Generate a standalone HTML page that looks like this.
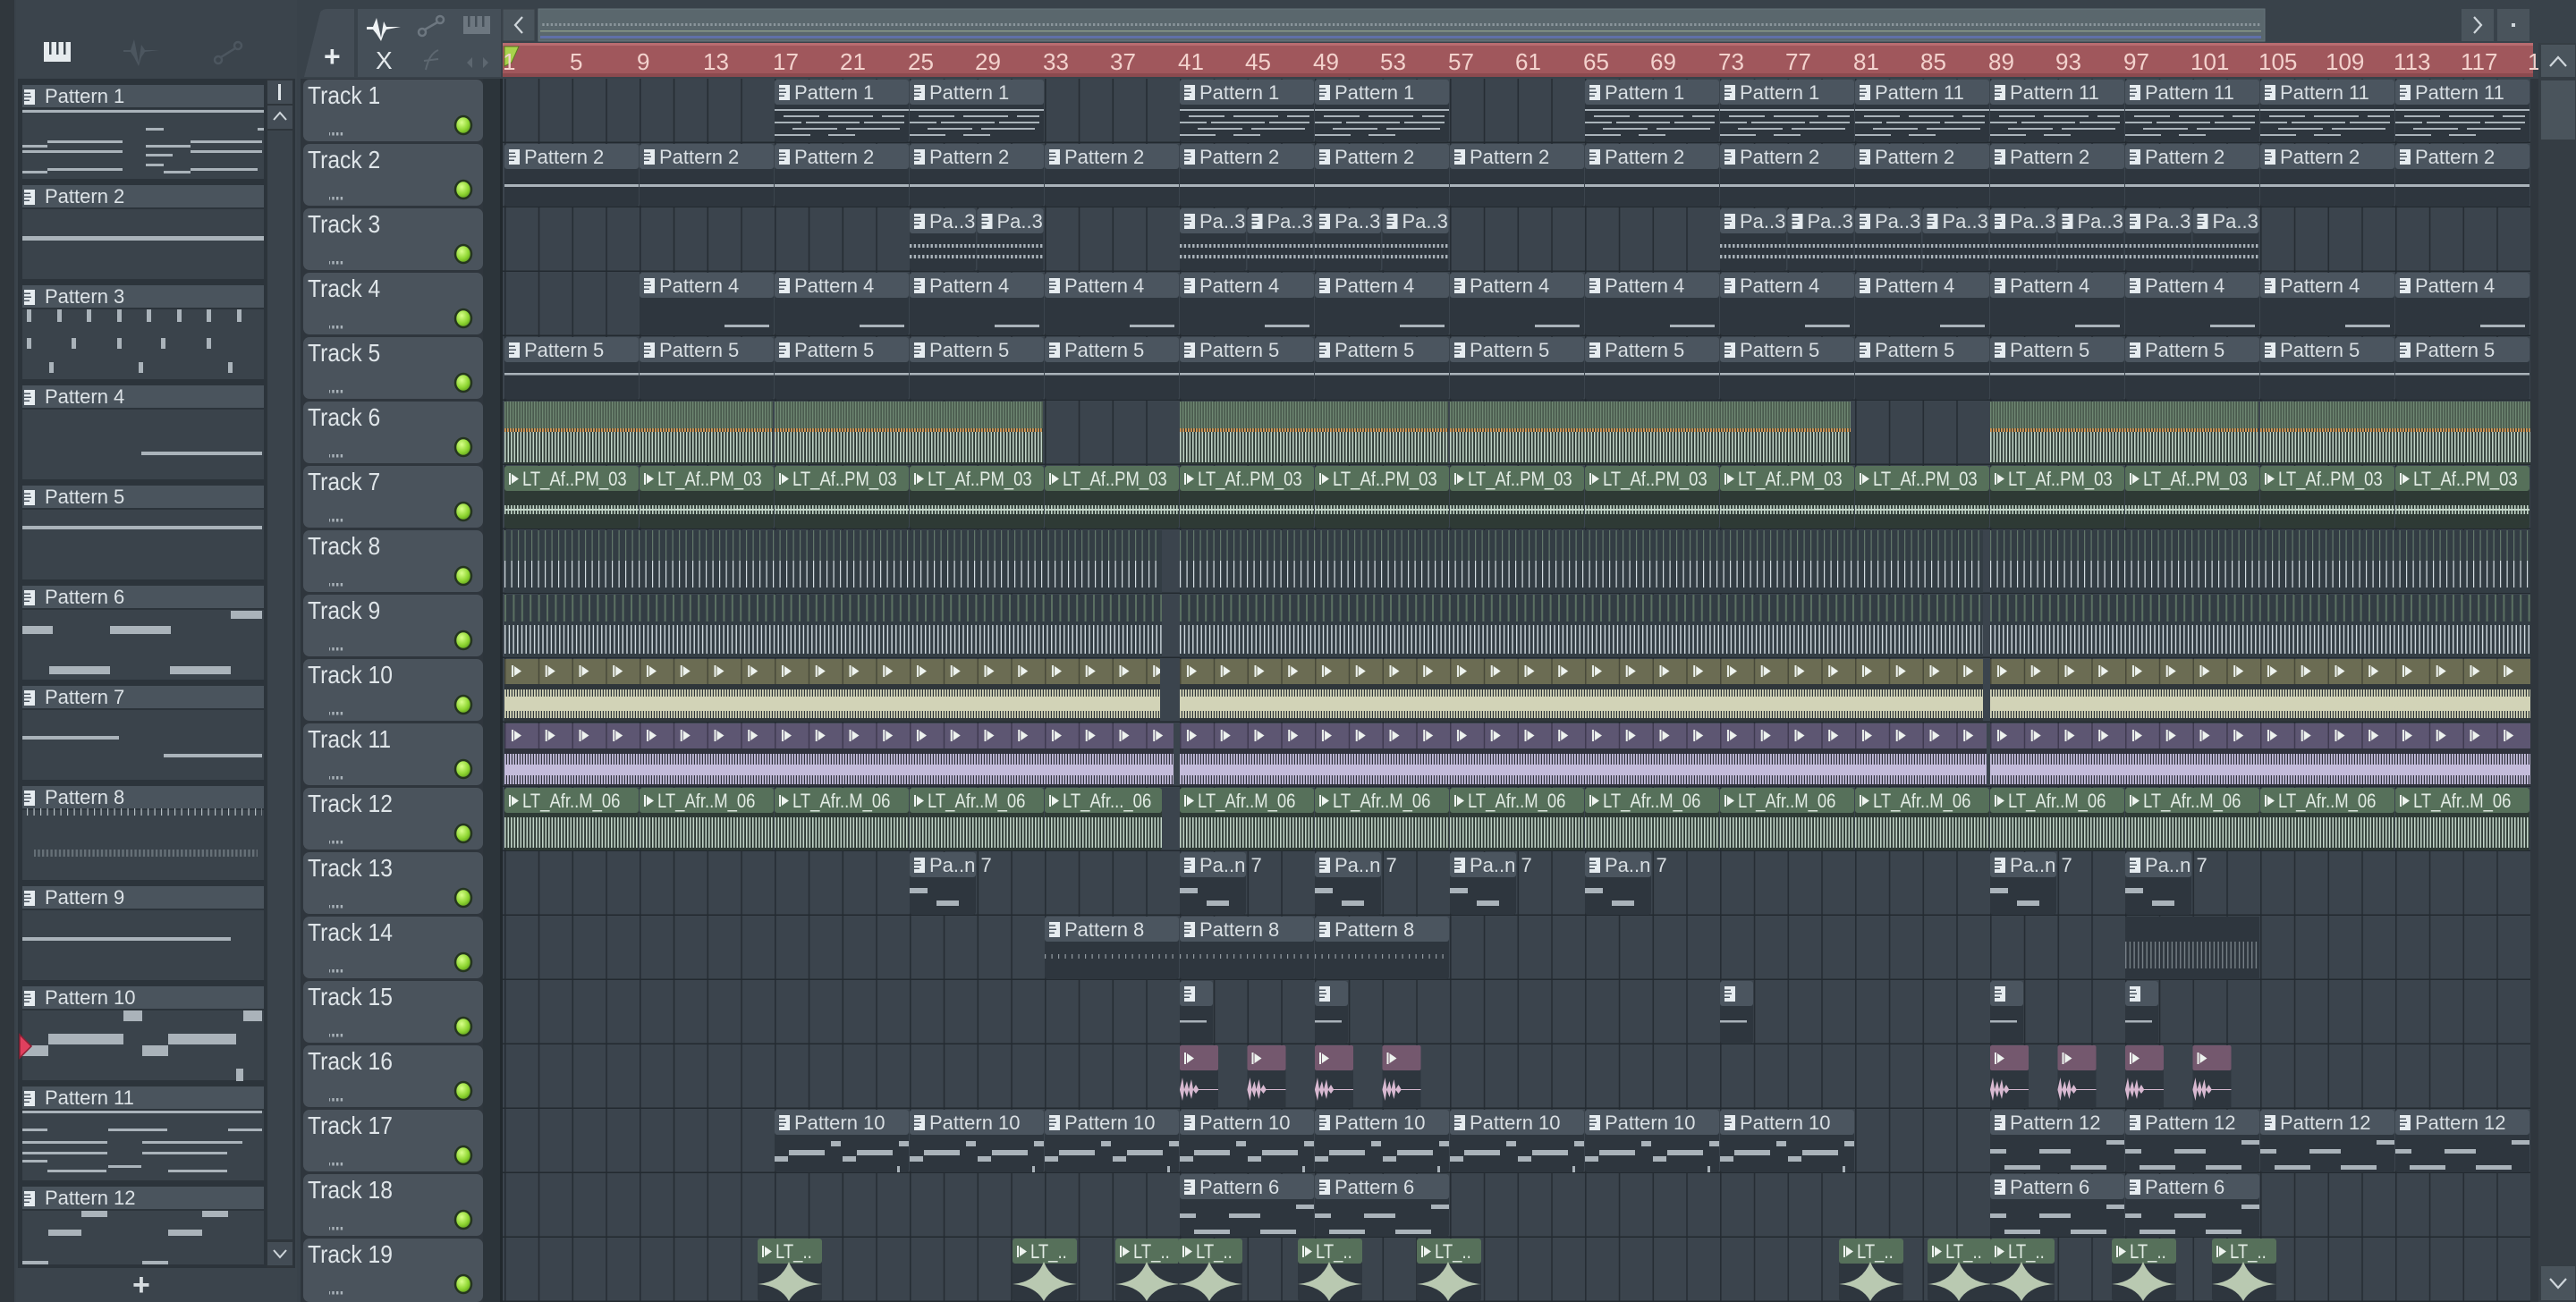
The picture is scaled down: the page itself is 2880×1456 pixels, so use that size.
<!DOCTYPE html>
<html><head><meta charset="utf-8"><style>
html,body{margin:0;padding:0;background:#39424a;width:2880px;height:1456px;overflow:hidden}
svg{display:block}
text{font-family:"Liberation Sans Narrow","Liberation Sans",sans-serif}
.t{font-size:22px;fill:#d9dfe3}
.tr{font-size:28px;fill:#dfe5e9}
.tr text{transform:scaleX(.88);transform-box:fill-box;transform-origin:0 0}
.rl{font-size:26px;fill:#f3d2cd}
.pl{font-size:22px;fill:#dde3e7}
.au{font-size:22px;fill:#e2ebe4}
.au text{transform:scaleX(.84);transform-box:fill-box;transform-origin:0 0}
</style></head><body>
<svg width="2880" height="1456" viewBox="0 0 2880 1456" xmlns="http://www.w3.org/2000/svg">
<defs>
<g id="pi"><rect x="5" y="6" width="12" height="17" fill="#e6ecf0"/><rect x="5" y="9.5" width="7" height="1.5" fill="#4b555f"/><rect x="5" y="13.5" width="8" height="1.5" fill="#4b555f"/><rect x="5" y="17.5" width="6" height="1.5" fill="#4b555f"/></g>
<g id="P8"><rect width="150" height="70" rx="3" fill="#2e363e"/><rect width="150" height="28" rx="3" fill="#4b555f"/><use href="#pi"/></g>
<g id="P4"><rect width="74" height="70" rx="3" fill="#2e363e"/><rect width="74" height="28" rx="3" fill="#4b555f"/><use href="#pi"/></g>
<g id="P2"><rect width="37" height="70" rx="3" fill="#2e363e"/><rect width="37" height="28" rx="3" fill="#4b555f"/><use href="#pi"/></g>
<path id="ai" d="M1 1v13h2V1z M4 2 L12 7.5 L4 13z" fill="#eef3ef"/>
<pattern id="gl" patternUnits="userSpaceOnUse" x="564" width="37.75" height="10"><rect width="1.6" height="10" fill="#262d34"/></pattern>
<pattern id="hl" patternUnits="userSpaceOnUse" y="88" width="10" height="72"><rect y="70.5" width="10" height="1.5" fill="#232a30"/></pattern>
<pattern id="wv" patternUnits="userSpaceOnUse" width="3.5" height="100"><rect width="1.6" height="100" fill="#c1d4c7"/></pattern>
<pattern id="wvC" patternUnits="userSpaceOnUse" width="3" height="100"><rect width="1.8" height="100" fill="#d2d3b7"/></pattern>
<pattern id="wvP" patternUnits="userSpaceOnUse" width="3" height="100"><rect width="1.8" height="100" fill="#c4bcdb"/></pattern>
<pattern id="stG" patternUnits="userSpaceOnUse" width="3" height="100"><rect width="3" height="100" fill="#4a5b4e"/><rect width="1.3" height="100" fill="#6f8873"/></pattern>
<pattern id="or" patternUnits="userSpaceOnUse" width="3" height="10"><rect width="1.8" height="10" fill="#d99a55"/></pattern>
<pattern id="tk" patternUnits="userSpaceOnUse" width="7.5" height="100"><rect width="1.2" height="100" fill="#d4dde2"/></pattern>
<pattern id="tkg" patternUnits="userSpaceOnUse" width="7.5" height="100"><rect width="1.2" height="100" fill="#62776a"/></pattern>
<pattern id="tkg9" patternUnits="userSpaceOnUse" width="9.4" height="100"><rect width="2" height="100" fill="#5b7062"/></pattern>
<pattern id="tk9" patternUnits="userSpaceOnUse" width="4.7" height="100"><rect width="1.4" height="100" fill="#d0dae0"/></pattern>
<pattern id="dash" patternUnits="userSpaceOnUse" width="4.7" height="10"><rect width="2.4" height="10" fill="#aab3ba"/></pattern>
<pattern id="sO" patternUnits="userSpaceOnUse" width="37.75" height="28"><rect width="37.75" height="28" fill="#6b6c53"/><rect width="1.5" height="28" fill="#48493a"/><use href="#ai" x="7" y="6"/></pattern>
<pattern id="sU" patternUnits="userSpaceOnUse" width="37.75" height="28"><rect width="37.75" height="28" fill="#5d5672"/><rect width="1.5" height="28" fill="#3f3a50"/><use href="#ai" x="7" y="6"/></pattern>
<g id="n1" fill="#aab3ba"><rect y="33" width="150" height="2"/><rect x="10" y="40" width="40" height="2"/><rect x="60" y="40" width="50" height="2"/><rect x="120" y="40" width="25" height="2"/><rect y="47" width="30" height="2"/><rect x="35" y="47" width="60" height="2"/><rect x="100" y="47" width="45" height="2"/><rect x="20" y="54" width="50" height="2"/><rect x="80" y="54" width="60" height="2"/><rect y="61" width="40" height="2"/><rect x="60" y="61" width="30" height="2"/></g>
<g id="n2"><rect y="45" width="150" height="3" fill="#aab3ba"/></g>
<g id="n3"><rect y="40" width="74" height="4" fill="url(#dash)"/><rect y="52" width="74" height="4" fill="url(#dash)"/></g>
<g id="n4" fill="#aab3ba"><rect x="95" y="58" width="50" height="3"/></g>
<g id="n5"><rect y="40" width="150" height="2.5" fill="#aab3ba"/></g>
<g id="n6" fill="#aab3ba"><rect x="0" y="44" width="18" height="5"/><rect x="55" y="44" width="35" height="5"/><rect x="130" y="34" width="20" height="5"/><rect x="16" y="62" width="40" height="5"/><rect x="90" y="62" width="40" height="5"/></g>
<g id="n7" fill="#aab3ba"><rect x="0" y="40" width="20" height="6"/><rect x="30" y="54" width="25" height="6"/></g>
<g id="n8"><rect y="42" width="150" height="5" fill="url(#tk)" opacity=".6"/></g>
<g id="n10" fill="#aab3ba"><rect x="0" y="52" width="15" height="6"/><rect x="16" y="45" width="40" height="6"/><rect x="63" y="35" width="11" height="6"/><rect x="76" y="52" width="15" height="6"/><rect x="92" y="45" width="40" height="6"/><rect x="139" y="35" width="11" height="6"/><rect x="137" y="63" width="3" height="7"/></g>
<g id="n15"><rect y="44" width="30" height="2.5" fill="#aab3ba"/></g>
<g id="A7"><rect width="150" height="70" rx="3" fill="#2e3a35"/><rect width="150" height="28" rx="3" fill="#56705a"/><use href="#ai" x="4" y="7"/><rect y="44" width="150" height="10" fill="url(#wv)"/><rect y="48" width="150" height="2" fill="#c1d4c7"/></g>
<g id="A12"><rect width="150" height="70" rx="3" fill="#2e3a35"/><rect width="150" height="28" rx="3" fill="#56705a"/><use href="#ai" x="4" y="7"/><rect y="33" width="150" height="34" fill="url(#wv)"/></g>
<g id="A19"><rect width="72" height="70" rx="3" fill="#2e363e"/><rect width="72" height="28" rx="3" fill="#56705a"/><use href="#ai" x="4" y="7"/><path d="M0 51 Q26 49 35 26 Q44 49 72 51 Q44 53 35 70 Q26 53 0 51Z" fill="#b9c9b1"/></g>
<g id="A16"><rect width="43" height="70" rx="2" fill="#2e363e"/><rect width="43" height="28" rx="2" fill="#74586e"/><use href="#ai" x="4" y="7"/><path d="M0 49 L3 36 L5 49 L8 40 L10 49 L13 38 L15 49 L18 44 L21 49 L43 49 L43 50 L21 50 L18 54 L15 50 L13 60 L10 50 L8 58 L5 50 L3 62 L0 50Z" fill="#d8b9d1"/></g>
</defs>

<rect width="2880" height="1456" fill="#39424a"/>
<rect x="0" y="0" width="16" height="1456" fill="#30373d"/>
<rect x="18" y="0" width="314" height="1456" fill="#3b444c"/>
<g fill="#e6ebee"><rect x="49" y="47" width="30" height="22"/></g>
<g fill="#3b444c"><rect x="55" y="47" width="2.5" height="14"/><rect x="63" y="47" width="2.5" height="14"/><rect x="71" y="47" width="2.5" height="14"/></g>
<path d="M138 56 L146 56 L150 44 L155 70 L158 50 L162 56 L178 56 L162 58 L158 64 L155 74 L150 64 L146 58 L138 58Z" fill="#4c565f"/>
<g stroke="#4c565f" stroke-width="2.5" fill="none"><circle cx="244" cy="67" r="4"/><circle cx="266" cy="51" r="4"/><line x1="247" y1="64" x2="263" y2="54"/></g>
<rect x="20" y="88" width="310" height="1330" fill="#2c343b"/>
<g>
<rect x="25" y="95" width="270" height="25" fill="#4a545d"/><rect x="25" y="122" width="270" height="78" fill="#3a434b"/>
<rect x="25" y="207" width="270" height="25" fill="#4a545d"/><rect x="25" y="234" width="270" height="78" fill="#3a434b"/>
<rect x="25" y="319" width="270" height="25" fill="#4a545d"/><rect x="25" y="346" width="270" height="78" fill="#3a434b"/>
<rect x="25" y="431" width="270" height="25" fill="#4a545d"/><rect x="25" y="458" width="270" height="78" fill="#3a434b"/>
<rect x="25" y="543" width="270" height="25" fill="#4a545d"/><rect x="25" y="570" width="270" height="78" fill="#3a434b"/>
<rect x="25" y="655" width="270" height="25" fill="#4a545d"/><rect x="25" y="682" width="270" height="78" fill="#3a434b"/>
<rect x="25" y="767" width="270" height="25" fill="#4a545d"/><rect x="25" y="794" width="270" height="78" fill="#3a434b"/>
<rect x="25" y="879" width="270" height="25" fill="#4a545d"/><rect x="25" y="906" width="270" height="78" fill="#3a434b"/>
<rect x="25" y="991" width="270" height="25" fill="#4a545d"/><rect x="25" y="1018" width="270" height="78" fill="#3a434b"/>
<rect x="25" y="1103" width="270" height="25" fill="#4a545d"/><rect x="25" y="1130" width="270" height="78" fill="#3a434b"/>
<rect x="25" y="1215" width="270" height="25" fill="#4a545d"/><rect x="25" y="1242" width="270" height="78" fill="#3a434b"/>
<rect x="25" y="1327" width="270" height="25" fill="#4a545d"/><rect x="25" y="1354" width="270" height="60" fill="#3a434b"/>
</g>
<g><use href="#pi" x="22" y="94"/><use href="#pi" x="22" y="206"/><use href="#pi" x="22" y="318"/><use href="#pi" x="22" y="430"/><use href="#pi" x="22" y="542"/><use href="#pi" x="22" y="654"/><use href="#pi" x="22" y="766"/><use href="#pi" x="22" y="878"/><use href="#pi" x="22" y="990"/><use href="#pi" x="22" y="1102"/><use href="#pi" x="22" y="1214"/><use href="#pi" x="22" y="1326"/></g>
<g class="pl">
<text x="50" y="115" class="pl">Pattern 1</text><text x="50" y="227" class="pl">Pattern 2</text><text x="50" y="339" class="pl">Pattern 3</text><text x="50" y="451" class="pl">Pattern 4</text><text x="50" y="563" class="pl">Pattern 5</text><text x="50" y="675" class="pl">Pattern 6</text><text x="50" y="787" class="pl">Pattern 7</text><text x="50" y="899" class="pl">Pattern 8</text><text x="50" y="1011" class="pl">Pattern 9</text><text x="50" y="1123" class="pl">Pattern 10</text><text x="50" y="1235" class="pl">Pattern 11</text><text x="50" y="1347" class="pl">Pattern 12</text>
</g>
<g fill="#aab3ba">
<rect x="25" y="123" width="270" height="3"/><rect x="163" y="143" width="20" height="3"/><rect x="288" y="143" width="7" height="3"/><rect x="25" y="162" width="28" height="3"/><rect x="53" y="157" width="84" height="3"/><rect x="163" y="162" width="50" height="3"/><rect x="213" y="157" width="80" height="3"/><rect x="25" y="168" width="28" height="3"/><rect x="53" y="168" width="84" height="3"/><rect x="163" y="172" width="30" height="3"/><rect x="213" y="168" width="80" height="3"/><rect x="163" y="183" width="20" height="3"/><rect x="25" y="191" width="28" height="3"/><rect x="53" y="188" width="84" height="3"/><rect x="183" y="191" width="30" height="3"/><rect x="213" y="188" width="75" height="3"/>
<rect x="25" y="264" width="270" height="5"/>
<rect x="30" y="346" width="5" height="14"/><rect x="64" y="346" width="5" height="14"/><rect x="97" y="346" width="5" height="14"/><rect x="131" y="346" width="5" height="14"/><rect x="164" y="346" width="5" height="14"/><rect x="198" y="346" width="5" height="14"/><rect x="231" y="346" width="5" height="14"/><rect x="265" y="346" width="5" height="14"/>
<rect x="30" y="378" width="5" height="12"/><rect x="80" y="378" width="5" height="12"/><rect x="131" y="378" width="5" height="12"/><rect x="180" y="378" width="5" height="12"/><rect x="231" y="378" width="5" height="12"/><rect x="55" y="405" width="5" height="12"/><rect x="155" y="405" width="5" height="12"/><rect x="255" y="405" width="5" height="12"/>
<rect x="158" y="505" width="135" height="4"/>
<rect x="25" y="588" width="268" height="4"/>
<rect x="258" y="683" width="35" height="9"/><rect x="25" y="700" width="34" height="9"/><rect x="123" y="700" width="68" height="9"/><rect x="55" y="745" width="68" height="9"/><rect x="190" y="745" width="68" height="9"/>
<rect x="25" y="823" width="108" height="4"/><rect x="183" y="843" width="110" height="4"/>
<g opacity=".8"><rect x="25" y="904" width="268" height="8" fill="url(#tk)"/><rect x="38" y="950" width="250" height="8" fill="url(#dash)" opacity=".5"/></g>
<rect x="25" y="1048" width="233" height="4"/>
<rect x="138" y="1130" width="21" height="12"/><rect x="272" y="1130" width="21" height="12"/><rect x="54" y="1156" width="84" height="12"/><rect x="188" y="1156" width="76" height="12"/><rect x="25" y="1169" width="29" height="12"/><rect x="159" y="1169" width="29" height="12"/><rect x="264" y="1195" width="8" height="14"/>
<rect x="25" y="1242" width="268" height="3"/><rect x="25" y="1262" width="28" height="3"/><rect x="121" y="1262" width="66" height="3"/><rect x="255" y="1262" width="38" height="3"/><rect x="25" y="1276" width="95" height="3"/><rect x="159" y="1276" width="112" height="3"/><rect x="25" y="1288" width="95" height="3"/><rect x="159" y="1288" width="95" height="3"/><rect x="25" y="1297" width="28" height="3"/><rect x="121" y="1303" width="37" height="3"/><rect x="53" y="1308" width="66" height="3"/><rect x="188" y="1308" width="66" height="3"/>
<rect x="91" y="1354" width="29" height="7"/><rect x="226" y="1354" width="29" height="7"/><rect x="54" y="1375" width="37" height="7"/><rect x="188" y="1375" width="38" height="7"/><rect x="25" y="1410" width="29" height="4"/><rect x="159" y="1410" width="29" height="4"/>
</g>
<path d="M22 1157 L35 1170 L22 1183Z" fill="#e0405e" stroke="#8a1f33" stroke-width="1.5"/>
<rect x="298" y="88" width="30" height="1330" fill="#2e353b"/>
<rect x="299" y="90" width="28" height="26" fill="#434c55"/><rect x="311" y="94" width="3" height="18" fill="#dfe5e9"/>
<rect x="299" y="118" width="28" height="26" fill="#434c55"/><path d="M306 134 L313 126 L320 134" stroke="#cfd6db" stroke-width="2" fill="none"/>
<rect x="299" y="146" width="28" height="1240" fill="#3a434b"/>
<rect x="299" y="1389" width="28" height="26" fill="#434c55"/><path d="M306 1398 L313 1406 L320 1398" stroke="#cfd6db" stroke-width="2" fill="none"/>
<text x="148" y="1448" style="font-size:34px;fill:#d7dde1;font-family:'Liberation Sans',sans-serif;font-weight:bold">+</text>

<path d="M340 86 L358 14 Q360 10 366 10 L396 10 L396 86Z" fill="#444d56"/>
<text x="362" y="74" style="font-size:32px;fill:#e8edf0;font-family:'Liberation Sans',sans-serif;font-weight:bold">+</text>
<rect x="400" y="10" width="160" height="76" fill="#454f58"/>
<path d="M410 30 L417 30 L421 20 L426 42 L429 24 L432 30 L448 30 L432 33 L429 38 L426 46 L421 38 L417 33 L410 33Z" fill="#eef2f4"/>
<text x="420" y="77" style="font-size:28px;fill:#e4e9ec;font-family:'Liberation Sans',sans-serif">X</text>
<g stroke="#6d7780" stroke-width="2.5" fill="none"><circle cx="472" cy="36" r="4"/><circle cx="492" cy="22" r="4"/><line x1="475" y1="33" x2="489" y2="25"/></g>
<rect x="518" y="18" width="30" height="20" fill="#6d7780"/>
<g fill="#454f58"><rect x="523" y="18" width="2.5" height="12"/><rect x="531" y="18" width="2.5" height="12"/><rect x="539" y="18" width="2.5" height="12"/></g>
<path d="M476 78 Q480 60 490 56 M474 68 L490 66" stroke="#5d6770" stroke-width="2" fill="none"/>
<path d="M522 70 L528 64 L528 76Z M546 70 L540 64 L540 76Z" fill="#5d6770"/>
<rect x="562" y="10" width="36" height="36" fill="#4a545c" stroke="#3a4249"/>
<path d="M584 19 L576 28 L584 37" stroke="#d0d7dc" stroke-width="2.2" fill="none"/>
<rect x="602" y="10" width="1930" height="36" fill="#5a676d" stroke="#66747b"/>
<rect x="604" y="26" width="1924" height="3" fill="url(#dash)" opacity=".6"/>
<rect x="604" y="34" width="1924" height="1.5" fill="#8a9a8a"/>
<rect x="604" y="40" width="1924" height="3" fill="#6070a8"/>
<rect x="2752" y="10" width="36" height="36" fill="#4a545c"/>
<path d="M2766 19 L2774 28 L2766 37" stroke="#d0d7dc" stroke-width="2.2" fill="none"/>
<rect x="2792" y="10" width="36" height="36" fill="#4a545c"/><rect x="2808" y="26" width="4" height="4" fill="#d0d7dc"/>
<rect x="562" y="48" width="2270" height="38" fill="#a0575c"/>
<rect x="562" y="48" width="2270" height="3" fill="#b86c70"/>
<rect x="562" y="82" width="2270" height="4" fill="#8c4a4f"/>
<path d="M564 52 L580 52 L572 70 L564 74Z" fill="#a8d24c" stroke="#5c7a22" stroke-width="1"/>
<g class="rl">
<text x="562" y="78">1</text><text x="637" y="78">5</text><text x="712" y="78">9</text><text x="786" y="78">13</text><text x="864" y="78">17</text><text x="939" y="78">21</text><text x="1015" y="78">25</text><text x="1090" y="78">29</text><text x="1166" y="78">33</text><text x="1241" y="78">37</text><text x="1317" y="78">41</text><text x="1392" y="78">45</text><text x="1468" y="78">49</text><text x="1543" y="78">53</text><text x="1619" y="78">57</text><text x="1694" y="78">61</text><text x="1770" y="78">65</text><text x="1845" y="78">69</text><text x="1921" y="78">73</text><text x="1996" y="78">77</text><text x="2072" y="78">81</text><text x="2147" y="78">85</text><text x="2223" y="78">89</text><text x="2298" y="78">93</text><text x="2374" y="78">97</text><text x="2449" y="78">101</text><text x="2525" y="78">105</text><text x="2600" y="78">109</text><text x="2676" y="78">113</text><text x="2751" y="78">117</text><text x="2826" y="78">1</text>
</g>
<rect x="2838" y="48" width="42" height="1408" fill="#353d44"/>
<rect x="2841" y="50" width="38" height="36" fill="#4a545c"/><path d="M2851 74 L2860 64 L2869 74" stroke="#d0d7dc" stroke-width="2.2" fill="none"/>
<rect x="2841" y="90" width="38" height="66" fill="#4a545c"/>
<rect x="2841" y="1416" width="38" height="38" fill="#4a545c"/><path d="M2851 1430 L2860 1440 L2869 1430" stroke="#d0d7dc" stroke-width="2.2" fill="none"/>

<rect x="336" y="88" width="226" height="1368" fill="#2f363d"/>
<rect x="540" y="88" width="22" height="1368" fill="#2c343a"/>
<rect x="559" y="88" width="3" height="1368" fill="#21282d"/>
<g fill="#4a535c">
<rect x="339" y="89" width="201" height="69" rx="7"/><rect x="339" y="161" width="201" height="69" rx="7"/><rect x="339" y="233" width="201" height="69" rx="7"/><rect x="339" y="305" width="201" height="69" rx="7"/><rect x="339" y="377" width="201" height="69" rx="7"/><rect x="339" y="449" width="201" height="69" rx="7"/><rect x="339" y="521" width="201" height="69" rx="7"/><rect x="339" y="593" width="201" height="69" rx="7"/><rect x="339" y="665" width="201" height="69" rx="7"/><rect x="339" y="737" width="201" height="69" rx="7"/><rect x="339" y="809" width="201" height="69" rx="7"/><rect x="339" y="881" width="201" height="69" rx="7"/><rect x="339" y="953" width="201" height="69" rx="7"/><rect x="339" y="1025" width="201" height="69" rx="7"/><rect x="339" y="1097" width="201" height="69" rx="7"/><rect x="339" y="1169" width="201" height="69" rx="7"/><rect x="339" y="1241" width="201" height="69" rx="7"/><rect x="339" y="1313" width="201" height="69" rx="7"/><rect x="339" y="1385" width="201" height="71" rx="7"/>
</g>
<g class="tr">
<text x="344" y="116">Track 1</text><text x="344" y="188">Track 2</text><text x="344" y="260">Track 3</text><text x="344" y="332">Track 4</text><text x="344" y="404">Track 5</text><text x="344" y="476">Track 6</text><text x="344" y="548">Track 7</text><text x="344" y="620">Track 8</text><text x="344" y="692">Track 9</text><text x="344" y="764">Track 10</text><text x="344" y="836">Track 11</text><text x="344" y="908">Track 12</text><text x="344" y="980">Track 13</text><text x="344" y="1052">Track 14</text><text x="344" y="1124">Track 15</text><text x="344" y="1196">Track 16</text><text x="344" y="1268">Track 17</text><text x="344" y="1340">Track 18</text><text x="344" y="1412">Track 19</text>
</g>
<g>
<rect x="368" y="148" width="16" height="3.5" fill="url(#dash)"/><rect x="368" y="220" width="16" height="3.5" fill="url(#dash)"/><rect x="368" y="292" width="16" height="3.5" fill="url(#dash)"/><rect x="368" y="364" width="16" height="3.5" fill="url(#dash)"/><rect x="368" y="436" width="16" height="3.5" fill="url(#dash)"/><rect x="368" y="508" width="16" height="3.5" fill="url(#dash)"/><rect x="368" y="580" width="16" height="3.5" fill="url(#dash)"/><rect x="368" y="652" width="16" height="3.5" fill="url(#dash)"/><rect x="368" y="724" width="16" height="3.5" fill="url(#dash)"/><rect x="368" y="796" width="16" height="3.5" fill="url(#dash)"/><rect x="368" y="868" width="16" height="3.5" fill="url(#dash)"/><rect x="368" y="940" width="16" height="3.5" fill="url(#dash)"/><rect x="368" y="1012" width="16" height="3.5" fill="url(#dash)"/><rect x="368" y="1084" width="16" height="3.5" fill="url(#dash)"/><rect x="368" y="1156" width="16" height="3.5" fill="url(#dash)"/><rect x="368" y="1228" width="16" height="3.5" fill="url(#dash)"/><rect x="368" y="1300" width="16" height="3.5" fill="url(#dash)"/><rect x="368" y="1372" width="16" height="3.5" fill="url(#dash)"/><rect x="368" y="1444" width="16" height="3.5" fill="url(#dash)"/>
</g>
<radialGradient id="led" cx="0.4" cy="0.35" r="0.7"><stop offset="0" stop-color="#d8ff8a"/><stop offset="0.6" stop-color="#8fd632"/><stop offset="1" stop-color="#5a9a18"/></radialGradient>
<g fill="url(#led)" stroke="#253520" stroke-width="2.5">
<ellipse cx="518" cy="140" rx="9" ry="10"/><ellipse cx="518" cy="212" rx="9" ry="10"/><ellipse cx="518" cy="284" rx="9" ry="10"/><ellipse cx="518" cy="356" rx="9" ry="10"/><ellipse cx="518" cy="428" rx="9" ry="10"/><ellipse cx="518" cy="500" rx="9" ry="10"/><ellipse cx="518" cy="572" rx="9" ry="10"/><ellipse cx="518" cy="644" rx="9" ry="10"/><ellipse cx="518" cy="716" rx="9" ry="10"/><ellipse cx="518" cy="788" rx="9" ry="10"/><ellipse cx="518" cy="860" rx="9" ry="10"/><ellipse cx="518" cy="932" rx="9" ry="10"/><ellipse cx="518" cy="1004" rx="9" ry="10"/><ellipse cx="518" cy="1076" rx="9" ry="10"/><ellipse cx="518" cy="1148" rx="9" ry="10"/><ellipse cx="518" cy="1220" rx="9" ry="10"/><ellipse cx="518" cy="1292" rx="9" ry="10"/><ellipse cx="518" cy="1364" rx="9" ry="10"/><ellipse cx="518" cy="1436" rx="9" ry="10"/>
</g>

<rect x="562" y="88" width="2267" height="1368" fill="#3b444d"/>
<rect x="562" y="88" width="2267" height="1368" fill="url(#gl)"/>
<rect x="562" y="88" width="2267" height="1368" fill="url(#hl)"/>
<rect x="2829" y="88" width="9" height="1368" fill="#2f363d"/>

<g class="t">
<g transform="translate(866,89)"><use href="#P8"/><use href="#n1"/><text x="22" y="22">Pattern 1</text></g>
<g transform="translate(1017,89)"><use href="#P8"/><use href="#n1"/><text x="22" y="22">Pattern 1</text></g>
<g transform="translate(1319,89)"><use href="#P8"/><use href="#n1"/><text x="22" y="22">Pattern 1</text></g>
<g transform="translate(1470,89)"><use href="#P8"/><use href="#n1"/><text x="22" y="22">Pattern 1</text></g>
<g transform="translate(1772,89)"><use href="#P8"/><use href="#n1"/><text x="22" y="22">Pattern 1</text></g>
<g transform="translate(1923,89)"><use href="#P8"/><use href="#n1"/><text x="22" y="22">Pattern 1</text></g>
<g transform="translate(2074,89)"><use href="#P8"/><use href="#n1"/><text x="22" y="22">Pattern 11</text></g>
<g transform="translate(2225,89)"><use href="#P8"/><use href="#n1"/><text x="22" y="22">Pattern 11</text></g>
<g transform="translate(2376,89)"><use href="#P8"/><use href="#n1"/><text x="22" y="22">Pattern 11</text></g>
<g transform="translate(2527,89)"><use href="#P8"/><use href="#n1"/><text x="22" y="22">Pattern 11</text></g>
<g transform="translate(2678,89)"><use href="#P8"/><use href="#n1"/><text x="22" y="22">Pattern 11</text></g>
</g>
<g class="t">
<g transform="translate(564,161)"><use href="#P8"/><use href="#n2"/><text x="22" y="22">Pattern 2</text></g>
<g transform="translate(715,161)"><use href="#P8"/><use href="#n2"/><text x="22" y="22">Pattern 2</text></g>
<g transform="translate(866,161)"><use href="#P8"/><use href="#n2"/><text x="22" y="22">Pattern 2</text></g>
<g transform="translate(1017,161)"><use href="#P8"/><use href="#n2"/><text x="22" y="22">Pattern 2</text></g>
<g transform="translate(1168,161)"><use href="#P8"/><use href="#n2"/><text x="22" y="22">Pattern 2</text></g>
<g transform="translate(1319,161)"><use href="#P8"/><use href="#n2"/><text x="22" y="22">Pattern 2</text></g>
<g transform="translate(1470,161)"><use href="#P8"/><use href="#n2"/><text x="22" y="22">Pattern 2</text></g>
<g transform="translate(1621,161)"><use href="#P8"/><use href="#n2"/><text x="22" y="22">Pattern 2</text></g>
<g transform="translate(1772,161)"><use href="#P8"/><use href="#n2"/><text x="22" y="22">Pattern 2</text></g>
<g transform="translate(1923,161)"><use href="#P8"/><use href="#n2"/><text x="22" y="22">Pattern 2</text></g>
<g transform="translate(2074,161)"><use href="#P8"/><use href="#n2"/><text x="22" y="22">Pattern 2</text></g>
<g transform="translate(2225,161)"><use href="#P8"/><use href="#n2"/><text x="22" y="22">Pattern 2</text></g>
<g transform="translate(2376,161)"><use href="#P8"/><use href="#n2"/><text x="22" y="22">Pattern 2</text></g>
<g transform="translate(2527,161)"><use href="#P8"/><use href="#n2"/><text x="22" y="22">Pattern 2</text></g>
<g transform="translate(2678,161)"><use href="#P8"/><use href="#n2"/><text x="22" y="22">Pattern 2</text></g>
</g>
<g class="t">
<g transform="translate(1017,233)"><use href="#P4"/><use href="#n3"/><text x="22" y="22">Pa..3</text></g>
<g transform="translate(1092.5,233)"><use href="#P4"/><use href="#n3"/><text x="22" y="22">Pa..3</text></g>
<g transform="translate(1319,233)"><use href="#P4"/><use href="#n3"/><text x="22" y="22">Pa..3</text></g>
<g transform="translate(1394.5,233)"><use href="#P4"/><use href="#n3"/><text x="22" y="22">Pa..3</text></g>
<g transform="translate(1470,233)"><use href="#P4"/><use href="#n3"/><text x="22" y="22">Pa..3</text></g>
<g transform="translate(1545.5,233)"><use href="#P4"/><use href="#n3"/><text x="22" y="22">Pa..3</text></g>
<g transform="translate(1923,233)"><use href="#P4"/><use href="#n3"/><text x="22" y="22">Pa..3</text></g>
<g transform="translate(1998.5,233)"><use href="#P4"/><use href="#n3"/><text x="22" y="22">Pa..3</text></g>
<g transform="translate(2074,233)"><use href="#P4"/><use href="#n3"/><text x="22" y="22">Pa..3</text></g>
<g transform="translate(2149.5,233)"><use href="#P4"/><use href="#n3"/><text x="22" y="22">Pa..3</text></g>
<g transform="translate(2225,233)"><use href="#P4"/><use href="#n3"/><text x="22" y="22">Pa..3</text></g>
<g transform="translate(2300.5,233)"><use href="#P4"/><use href="#n3"/><text x="22" y="22">Pa..3</text></g>
<g transform="translate(2376,233)"><use href="#P4"/><use href="#n3"/><text x="22" y="22">Pa..3</text></g>
<g transform="translate(2451.5,233)"><use href="#P4"/><use href="#n3"/><text x="22" y="22">Pa..3</text></g>
</g>
<g class="t">
<g transform="translate(715,305)"><use href="#P8"/><use href="#n4"/><text x="22" y="22">Pattern 4</text></g>
<g transform="translate(866,305)"><use href="#P8"/><use href="#n4"/><text x="22" y="22">Pattern 4</text></g>
<g transform="translate(1017,305)"><use href="#P8"/><use href="#n4"/><text x="22" y="22">Pattern 4</text></g>
<g transform="translate(1168,305)"><use href="#P8"/><use href="#n4"/><text x="22" y="22">Pattern 4</text></g>
<g transform="translate(1319,305)"><use href="#P8"/><use href="#n4"/><text x="22" y="22">Pattern 4</text></g>
<g transform="translate(1470,305)"><use href="#P8"/><use href="#n4"/><text x="22" y="22">Pattern 4</text></g>
<g transform="translate(1621,305)"><use href="#P8"/><use href="#n4"/><text x="22" y="22">Pattern 4</text></g>
<g transform="translate(1772,305)"><use href="#P8"/><use href="#n4"/><text x="22" y="22">Pattern 4</text></g>
<g transform="translate(1923,305)"><use href="#P8"/><use href="#n4"/><text x="22" y="22">Pattern 4</text></g>
<g transform="translate(2074,305)"><use href="#P8"/><use href="#n4"/><text x="22" y="22">Pattern 4</text></g>
<g transform="translate(2225,305)"><use href="#P8"/><use href="#n4"/><text x="22" y="22">Pattern 4</text></g>
<g transform="translate(2376,305)"><use href="#P8"/><use href="#n4"/><text x="22" y="22">Pattern 4</text></g>
<g transform="translate(2527,305)"><use href="#P8"/><use href="#n4"/><text x="22" y="22">Pattern 4</text></g>
<g transform="translate(2678,305)"><use href="#P8"/><use href="#n4"/><text x="22" y="22">Pattern 4</text></g>
</g>
<g class="t">
<g transform="translate(564,377)"><use href="#P8"/><use href="#n5"/><text x="22" y="22">Pattern 5</text></g>
<g transform="translate(715,377)"><use href="#P8"/><use href="#n5"/><text x="22" y="22">Pattern 5</text></g>
<g transform="translate(866,377)"><use href="#P8"/><use href="#n5"/><text x="22" y="22">Pattern 5</text></g>
<g transform="translate(1017,377)"><use href="#P8"/><use href="#n5"/><text x="22" y="22">Pattern 5</text></g>
<g transform="translate(1168,377)"><use href="#P8"/><use href="#n5"/><text x="22" y="22">Pattern 5</text></g>
<g transform="translate(1319,377)"><use href="#P8"/><use href="#n5"/><text x="22" y="22">Pattern 5</text></g>
<g transform="translate(1470,377)"><use href="#P8"/><use href="#n5"/><text x="22" y="22">Pattern 5</text></g>
<g transform="translate(1621,377)"><use href="#P8"/><use href="#n5"/><text x="22" y="22">Pattern 5</text></g>
<g transform="translate(1772,377)"><use href="#P8"/><use href="#n5"/><text x="22" y="22">Pattern 5</text></g>
<g transform="translate(1923,377)"><use href="#P8"/><use href="#n5"/><text x="22" y="22">Pattern 5</text></g>
<g transform="translate(2074,377)"><use href="#P8"/><use href="#n5"/><text x="22" y="22">Pattern 5</text></g>
<g transform="translate(2225,377)"><use href="#P8"/><use href="#n5"/><text x="22" y="22">Pattern 5</text></g>
<g transform="translate(2376,377)"><use href="#P8"/><use href="#n5"/><text x="22" y="22">Pattern 5</text></g>
<g transform="translate(2527,377)"><use href="#P8"/><use href="#n5"/><text x="22" y="22">Pattern 5</text></g>
<g transform="translate(2678,377)"><use href="#P8"/><use href="#n5"/><text x="22" y="22">Pattern 5</text></g>
</g>
<g>
<g transform="translate(564,449)"><rect width="300" height="70" fill="#2e3a35"/><rect width="300" height="30" fill="url(#stG)"/><rect y="30" width="300" height="4" fill="url(#or)"/><rect y="34" width="300" height="34" fill="url(#wv)"/></g>
<g transform="translate(866,449)"><rect width="300" height="70" fill="#2e3a35"/><rect width="300" height="30" fill="url(#stG)"/><rect y="30" width="300" height="4" fill="url(#or)"/><rect y="34" width="300" height="34" fill="url(#wv)"/></g>
<g transform="translate(1319,449)"><rect width="300" height="70" fill="#2e3a35"/><rect width="300" height="30" fill="url(#stG)"/><rect y="30" width="300" height="4" fill="url(#or)"/><rect y="34" width="300" height="34" fill="url(#wv)"/></g>
<g transform="translate(1621,449)"><rect width="448" height="70" fill="#2e3a35"/><rect width="448" height="30" fill="url(#stG)"/><rect y="30" width="448" height="4" fill="url(#or)"/><rect y="34" width="448" height="34" fill="url(#wv)"/></g>
<g transform="translate(2225,449)"><rect width="300" height="70" fill="#2e3a35"/><rect width="300" height="30" fill="url(#stG)"/><rect y="30" width="300" height="4" fill="url(#or)"/><rect y="34" width="300" height="34" fill="url(#wv)"/></g>
<g transform="translate(2527,449)"><rect width="302" height="70" fill="#2e3a35"/><rect width="302" height="30" fill="url(#stG)"/><rect y="30" width="302" height="4" fill="url(#or)"/><rect y="34" width="302" height="34" fill="url(#wv)"/></g>
</g>
<g class="au">
<g transform="translate(564,521)"><use href="#A7"/><text x="20" y="22">LT_Af..PM_03</text></g>
<g transform="translate(715,521)"><use href="#A7"/><text x="20" y="22">LT_Af..PM_03</text></g>
<g transform="translate(866,521)"><use href="#A7"/><text x="20" y="22">LT_Af..PM_03</text></g>
<g transform="translate(1017,521)"><use href="#A7"/><text x="20" y="22">LT_Af..PM_03</text></g>
<g transform="translate(1168,521)"><use href="#A7"/><text x="20" y="22">LT_Af..PM_03</text></g>
<g transform="translate(1319,521)"><use href="#A7"/><text x="20" y="22">LT_Af..PM_03</text></g>
<g transform="translate(1470,521)"><use href="#A7"/><text x="20" y="22">LT_Af..PM_03</text></g>
<g transform="translate(1621,521)"><use href="#A7"/><text x="20" y="22">LT_Af..PM_03</text></g>
<g transform="translate(1772,521)"><use href="#A7"/><text x="20" y="22">LT_Af..PM_03</text></g>
<g transform="translate(1923,521)"><use href="#A7"/><text x="20" y="22">LT_Af..PM_03</text></g>
<g transform="translate(2074,521)"><use href="#A7"/><text x="20" y="22">LT_Af..PM_03</text></g>
<g transform="translate(2225,521)"><use href="#A7"/><text x="20" y="22">LT_Af..PM_03</text></g>
<g transform="translate(2376,521)"><use href="#A7"/><text x="20" y="22">LT_Af..PM_03</text></g>
<g transform="translate(2527,521)"><use href="#A7"/><text x="20" y="22">LT_Af..PM_03</text></g>
<g transform="translate(2678,521)"><use href="#A7"/><text x="20" y="22">LT_Af..PM_03</text></g>
</g>
<g>
<g transform="translate(564,593)"><rect width="735" height="70" fill="#333d44"/><rect width="735" height="34" fill="url(#tkg)"/><rect y="34" width="735" height="30" fill="url(#tk)"/></g>
<g transform="translate(1319,593)"><rect width="898" height="70" fill="#333d44"/><rect width="898" height="34" fill="url(#tkg)"/><rect y="34" width="898" height="30" fill="url(#tk)"/></g>
<g transform="translate(2225,593)"><rect width="604" height="70" fill="#333d44"/><rect width="604" height="34" fill="url(#tkg)"/><rect y="34" width="604" height="30" fill="url(#tk)"/></g>
</g>
<g>
<g transform="translate(564,665)"><rect width="735" height="70" fill="#333d44"/><rect width="735" height="30" fill="url(#tkg9)"/><rect y="34" width="735" height="32" fill="url(#tk9)"/></g>
<g transform="translate(1319,665)"><rect width="898" height="70" fill="#333d44"/><rect width="898" height="30" fill="url(#tkg9)"/><rect y="34" width="898" height="32" fill="url(#tk9)"/></g>
<g transform="translate(2225,665)"><rect width="604" height="70" fill="#333d44"/><rect width="604" height="30" fill="url(#tkg9)"/><rect y="34" width="604" height="32" fill="url(#tk9)"/></g>
</g>
<g>
<g transform="translate(564,737)"><rect width="733" height="70" fill="#2f363a"/><rect width="733" height="28" fill="url(#sO)"/><rect y="34" width="733" height="32" fill="url(#wvC)"/><rect y="42" width="733" height="16" fill="#d2d3b7"/></g>
<g transform="translate(1319,737)"><rect width="898" height="70" fill="#2f363a"/><rect width="898" height="28" fill="url(#sO)"/><rect y="34" width="898" height="32" fill="url(#wvC)"/><rect y="42" width="898" height="16" fill="#d2d3b7"/></g>
<g transform="translate(2225,737)"><rect width="604" height="70" fill="#2f363a"/><rect width="604" height="28" fill="url(#sO)"/><rect y="34" width="604" height="32" fill="url(#wvC)"/><rect y="42" width="604" height="16" fill="#d2d3b7"/></g>
</g>
<g>
<g transform="translate(564,809)"><rect width="748" height="70" fill="#30323d"/><rect width="748" height="28" fill="url(#sU)"/><rect y="34" width="748" height="34" fill="url(#wvP)"/><rect y="46" width="748" height="12" fill="#c4bcdb"/></g>
<g transform="translate(1319,809)"><rect width="902" height="70" fill="#30323d"/><rect width="902" height="28" fill="url(#sU)"/><rect y="34" width="902" height="34" fill="url(#wvP)"/><rect y="46" width="902" height="12" fill="#c4bcdb"/></g>
<g transform="translate(2225,809)"><rect width="604" height="70" fill="#30323d"/><rect width="604" height="28" fill="url(#sU)"/><rect y="34" width="604" height="34" fill="url(#wvP)"/><rect y="46" width="604" height="12" fill="#c4bcdb"/></g>
</g>
<g class="au">
<g transform="translate(564,881)"><use href="#A12"/><text x="20" y="22">LT_Afr..M_06</text></g>
<g transform="translate(715,881)"><use href="#A12"/><text x="20" y="22">LT_Afr..M_06</text></g>
<g transform="translate(866,881)"><use href="#A12"/><text x="20" y="22">LT_Afr..M_06</text></g>
<g transform="translate(1017,881)"><use href="#A12"/><text x="20" y="22">LT_Afr..M_06</text></g>
<g transform="translate(1168,881)"><rect width="131" height="70" rx="3" fill="#2e3a35"/><rect width="131" height="28" rx="3" fill="#56705a"/><use href="#ai" x="4" y="7"/><rect y="33" width="131" height="34" fill="url(#wv)"/><text x="20" y="22">LT_Afr..._06</text></g>
<g transform="translate(1319,881)"><use href="#A12"/><text x="20" y="22">LT_Afr..M_06</text></g>
<g transform="translate(1470,881)"><use href="#A12"/><text x="20" y="22">LT_Afr..M_06</text></g>
<g transform="translate(1621,881)"><use href="#A12"/><text x="20" y="22">LT_Afr..M_06</text></g>
<g transform="translate(1772,881)"><use href="#A12"/><text x="20" y="22">LT_Afr..M_06</text></g>
<g transform="translate(1923,881)"><use href="#A12"/><text x="20" y="22">LT_Afr..M_06</text></g>
<g transform="translate(2074,881)"><use href="#A12"/><text x="20" y="22">LT_Afr..M_06</text></g>
<g transform="translate(2225,881)"><use href="#A12"/><text x="20" y="22">LT_Afr..M_06</text></g>
<g transform="translate(2376,881)"><use href="#A12"/><text x="20" y="22">LT_Afr..M_06</text></g>
<g transform="translate(2527,881)"><use href="#A12"/><text x="20" y="22">LT_Afr..M_06</text></g>
<g transform="translate(2678,881)"><use href="#A12"/><text x="20" y="22">LT_Afr..M_06</text></g>
</g>
<g class="t">
<g transform="translate(1017,953)"><use href="#P4"/><use href="#n7"/><text x="22" y="22">Pa..n 7</text></g>
<g transform="translate(1319,953)"><use href="#P4"/><use href="#n7"/><text x="22" y="22">Pa..n 7</text></g>
<g transform="translate(1470,953)"><use href="#P4"/><use href="#n7"/><text x="22" y="22">Pa..n 7</text></g>
<g transform="translate(1621,953)"><use href="#P4"/><use href="#n7"/><text x="22" y="22">Pa..n 7</text></g>
<g transform="translate(1772,953)"><use href="#P4"/><use href="#n7"/><text x="22" y="22">Pa..n 7</text></g>
<g transform="translate(2225,953)"><use href="#P4"/><use href="#n7"/><text x="22" y="22">Pa..n 7</text></g>
<g transform="translate(2376,953)"><use href="#P4"/><use href="#n7"/><text x="22" y="22">Pa..n 7</text></g>
</g>
<g class="t">
<g transform="translate(1168,1025)"><use href="#P8"/><use href="#n8"/><text x="22" y="22">Pattern 8</text></g>
<g transform="translate(1319,1025)"><use href="#P8"/><use href="#n8"/><text x="22" y="22">Pattern 8</text></g>
<g transform="translate(1470,1025)"><use href="#P8"/><use href="#n8"/><text x="22" y="22">Pattern 8</text></g>
<g transform="translate(2376,1025)"><rect width="150" height="70" fill="#2e363e"/><rect y="28" width="150" height="30" fill="url(#tk9)" opacity=".45"/></g>
</g>
<g>
<g transform="translate(1319,1097)"><use href="#P2"/><use href="#n15"/></g>
<g transform="translate(1470,1097)"><use href="#P2"/><use href="#n15"/></g>
<g transform="translate(1923,1097)"><use href="#P2"/><use href="#n15"/></g>
<g transform="translate(2225,1097)"><use href="#P2"/><use href="#n15"/></g>
<g transform="translate(2376,1097)"><use href="#P2"/><use href="#n15"/></g>
</g>
<g>
<use href="#A16" x="1319" y="1169"/><use href="#A16" x="1394.5" y="1169"/><use href="#A16" x="1470" y="1169"/><use href="#A16" x="1545.5" y="1169"/>
<use href="#A16" x="2225" y="1169"/><use href="#A16" x="2300.5" y="1169"/><use href="#A16" x="2376" y="1169"/><use href="#A16" x="2451.5" y="1169"/>
</g>
<g class="t">
<g transform="translate(866,1241)"><use href="#P8"/><use href="#n10"/><text x="22" y="22">Pattern 10</text></g>
<g transform="translate(1017,1241)"><use href="#P8"/><use href="#n10"/><text x="22" y="22">Pattern 10</text></g>
<g transform="translate(1168,1241)"><use href="#P8"/><use href="#n10"/><text x="22" y="22">Pattern 10</text></g>
<g transform="translate(1319,1241)"><use href="#P8"/><use href="#n10"/><text x="22" y="22">Pattern 10</text></g>
<g transform="translate(1470,1241)"><use href="#P8"/><use href="#n10"/><text x="22" y="22">Pattern 10</text></g>
<g transform="translate(1621,1241)"><use href="#P8"/><use href="#n10"/><text x="22" y="22">Pattern 10</text></g>
<g transform="translate(1772,1241)"><use href="#P8"/><use href="#n10"/><text x="22" y="22">Pattern 10</text></g>
<g transform="translate(1923,1241)"><use href="#P8"/><use href="#n10"/><text x="22" y="22">Pattern 10</text></g>
<g transform="translate(2225,1241)"><use href="#P8"/><use href="#n6"/><text x="22" y="22">Pattern 12</text></g>
<g transform="translate(2376,1241)"><use href="#P8"/><use href="#n6"/><text x="22" y="22">Pattern 12</text></g>
<g transform="translate(2527,1241)"><use href="#P8"/><use href="#n6"/><text x="22" y="22">Pattern 12</text></g>
<g transform="translate(2678,1241)"><use href="#P8"/><use href="#n6"/><text x="22" y="22">Pattern 12</text></g>
</g>
<g class="t">
<g transform="translate(1319,1313)"><use href="#P8"/><use href="#n6"/><text x="22" y="22">Pattern 6</text></g>
<g transform="translate(1470,1313)"><use href="#P8"/><use href="#n6"/><text x="22" y="22">Pattern 6</text></g>
<g transform="translate(2225,1313)"><use href="#P8"/><use href="#n6"/><text x="22" y="22">Pattern 6</text></g>
<g transform="translate(2376,1313)"><use href="#P8"/><use href="#n6"/><text x="22" y="22">Pattern 6</text></g>
</g>
<g class="au">
<g transform="translate(847,1385)"><use href="#A19"/><text x="20" y="22">LT_..</text></g>
<g transform="translate(1132,1385)"><use href="#A19"/><text x="20" y="22">LT_..</text></g>
<g transform="translate(1247,1385)"><use href="#A19"/><text x="20" y="22">LT_..</text></g>
<g transform="translate(1317,1385)"><use href="#A19"/><text x="20" y="22">LT_..</text></g>
<g transform="translate(1451,1385)"><use href="#A19"/><text x="20" y="22">LT_..</text></g>
<g transform="translate(1584,1385)"><use href="#A19"/><text x="20" y="22">LT_..</text></g>
<g transform="translate(2056,1385)"><use href="#A19"/><text x="20" y="22">LT_..</text></g>
<g transform="translate(2155,1385)"><use href="#A19"/><text x="20" y="22">LT_..</text></g>
<g transform="translate(2225,1385)"><use href="#A19"/><text x="20" y="22">LT_..</text></g>
<g transform="translate(2361,1385)"><use href="#A19"/><text x="20" y="22">LT_..</text></g>
<g transform="translate(2473,1385)"><use href="#A19"/><text x="20" y="22">LT_..</text></g>
</g>
</svg>
</body></html>
